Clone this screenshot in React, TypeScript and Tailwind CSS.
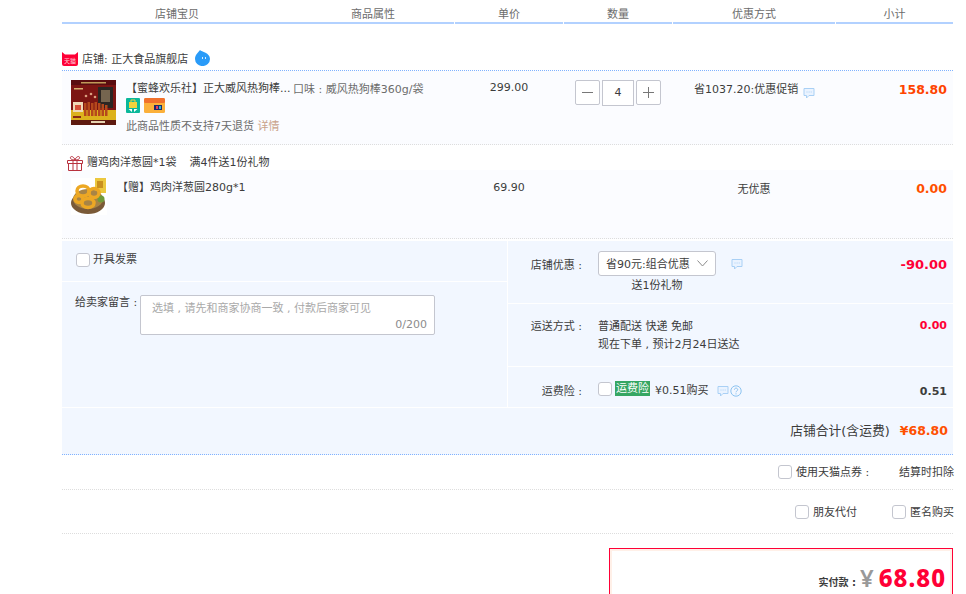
import type { ReactNode } from 'react';

const FONT = "font-['DejaVu_Sans','Noto_Sans_CJK_SC',sans-serif]";
const NUM = "font-['DejaVu_Sans','Noto_Sans_CJK_SC',sans-serif] font-bold";

function Checkbox() {
  return <span className="block w-[14px] h-[14px] shrink-0 bg-white border border-[#c4c6cf] rounded-[3px]" />;
}

function ChatIcon() {
  return (
    <svg width="12" height="12" viewBox="0 0 12 12" fill="none" className="block shrink-0">
      <path d="M1 1.500h10v7H6L3.500 11V8.500H1z" fill="#eaf3ff" stroke="#a9d0f5" strokeWidth="1" />
      <path d="M3.500 5h1M5.600 5h1M7.700 5h1" stroke="#a9d0f5" strokeWidth="1" />
    </svg>
  );
}

function HelpIcon() {
  return (
    <svg width="12" height="12" viewBox="0 0 12 12" fill="none" className="block shrink-0">
      <circle cx="6" cy="6" r="5.200" stroke="#8cc3f0" strokeWidth="1" />
      <path d="M4.400 4.700c0-2.100 3.300-2.100 3.300 0 0 1.300-1.700 1.200-1.700 2.600M6 8.300v1.100" stroke="#8cc3f0" strokeWidth="1" />
    </svg>
  );
}

function TmallIcon() {
  return (
    <svg width="16" height="14" viewBox="0 0 16 14" className="block">
      <path d="M0 0l3 2.500h10L16 0v12a2 2 0 0 1-2 2H2a2 2 0 0 1-2-2z" fill="#ff0036" />
      <text x="8" y="10.500" textAnchor="middle" fontSize="6" fill="#ffc9d4" fontFamily="'Noto Sans CJK SC', sans-serif">天猫</text>
    </svg>
  );
}

function WangIcon() {
  return (
    <svg width="15" height="16" viewBox="0 0 15 16" className="block">
      <path d="M5 0c1.500 2 10 2.500 10 9a7.400 7 0 0 1-15 0C0 5 3 2.500 5 0z" fill="#2a9bf8" />
      <rect x="7" y="7" width="1" height="2" fill="#d6ecff" />
      <rect x="10" y="7" width="1" height="2" fill="#d6ecff" />
    </svg>
  );
}

function GiftIcon() {
  return (
    <svg width="16" height="16" viewBox="0 0 16 16" fill="none" className="block">
      <path d="M.500 5.500h15v3H.500zM1.500 8.500h13V15.500h-13zM6 5.500V15.500M10 5.500V15.500" stroke="#b8323f" strokeWidth="1" />
      <path d="M8 5C5 5 3 4 3.500 2.200 4 .8 7 1.500 8 5zM8 5c3 0 5-1 4.500-2.800C12 .8 9 1.500 8 5z" stroke="#b8323f" strokeWidth="1" />
    </svg>
  );
}

// rough drawing of the sausage box photo
function SausageThumb() {
  return (
    <svg width="45" height="45" viewBox="0 0 45 45" className="block shrink-0">
      <rect width="45" height="45" fill="#7c1513" />
      <rect width="45" height="5" fill="#5a0d10" />
      <rect x="10" y="2" width="25" height="1.500" fill="#c09a58" />
      <rect x="3" y="8" width="9" height="1.500" fill="#d8b070" />
      <rect x="27" y="7" width="15" height="21" fill="#2b2623" />
      <rect x="30" y="10" width="9" height="12" fill="#75654f" />
      <rect x="0" y="30" width="45" height="10" fill="#dcb11c" />
      <rect x="0" y="40" width="45" height="5" fill="#5e1a10" />
      <rect x="2" y="22" width="10" height="10" fill="#efd9b8" />
      <rect x="4" y="25" width="6" height="5" fill="#d5503a" />
      <g fill="#b5481c">
        <rect x="13" y="23" width="2.500" height="13" />
        <rect x="16.500" y="22" width="2.500" height="14" />
        <rect x="20" y="23" width="2.500" height="13" />
        <rect x="23.500" y="22" width="2.500" height="14" />
        <rect x="27" y="23" width="2.500" height="13" />
        <rect x="30.500" y="24" width="2.500" height="12" />
        <rect x="34" y="25" width="2.500" height="11" />
      </g>
      <g fill="#dba080">
        <circle cx="15" cy="16" r="1.300" />
        <circle cx="20" cy="14" r="1.300" />
        <circle cx="24" cy="17" r="1.300" />
      </g>
      <rect x="20" y="41" width="14" height="2" fill="#e6d3b0" />
      <rect x="2" y="36" width="8" height="2" fill="#8a2a12" />
    </svg>
  );
}

// rough drawing of the onion ring basket photo
function RingsThumb() {
  return (
    <svg width="36" height="37" viewBox="0 0 36 37" className="block shrink-0">
      <rect width="36" height="37" fill="#ffffff" />
      <rect x="24" y="0" width="11" height="15" fill="#ecc83f" />
      <rect x="26" y="3" width="6" height="7" fill="#c9901f" />
      <ellipse cx="17" cy="25" rx="17" ry="11" fill="#7a5a38" />
      <ellipse cx="17" cy="21" rx="15" ry="10" fill="#a88445" />
      <circle cx="30" cy="21" r="3.500" fill="#6f9a3a" />
      <g fill="none" stroke="#eda824" strokeWidth="3.500">
        <ellipse cx="12" cy="13" rx="6" ry="5" />
        <ellipse cx="23" cy="15" rx="5" ry="4.500" />
        <ellipse cx="8" cy="21" rx="4" ry="3.500" />
        <ellipse cx="17" cy="25" rx="6" ry="4.500" />
      </g>
    </svg>
  );
}

function BagBadge() {
  return (
    <svg width="14" height="15" viewBox="0 0 14 15" className="block">
      <rect width="14" height="15" rx="1" fill="#0bb89a" />
      <rect x="3" y="4" width="8" height="6" fill="#f4d23c" />
      <path d="M5 4V2h4v2" stroke="#f4d23c" fill="none" />
      <path d="M2.500 11h3.500v3zM8 11h3.500L8 14z" fill="#ffffff" />
    </svg>
  );
}

function CardBadge() {
  return (
    <svg width="21" height="15" viewBox="0 0 21 15" className="block">
      <rect width="21" height="15" rx="1.500" fill="#fbb03b" />
      <rect width="21" height="5" rx="1.500" fill="#f0702c" />
      <rect x="10" y="7" width="8" height="5" fill="#1f2a6b" />
      <rect x="12" y="8" width="2" height="3" fill="#e83a5a" />
      <rect x="15" y="8" width="2" height="3" fill="#2fb5c9" />
    </svg>
  );
}

function StepButton({ children }: { children: ReactNode }) {
  return (
    <span className="w-[25px] h-[25px] flex items-center justify-center bg-white border border-[#c4c6cf] rounded-[2px]">
      {children}
    </span>
  );
}

function Stepper() {
  return (
    <div className="flex gap-[2px] items-start">
      <StepButton>
        <span className="block w-[11px] h-px bg-[#777]" />
      </StepButton>
      <span className="w-[32px] h-[26px] flex items-center justify-center bg-white border border-[#c4c6cf] text-[#3c3c3c]">4</span>
      <StepButton>
        <svg width="11" height="11" viewBox="0 0 11 11" className="block">
          <path d="M0 5.500h11M5.500 0v11" stroke="#777" strokeWidth="1" />
        </svg>
      </StepButton>
    </div>
  );
}

function InfoRow({ label, height, children, amount }: { label: string; height: string; children: ReactNode; amount: ReactNode }) {
  return (
    <div className={`flex bg-[#f2f7ff] ${height}`}>
      <div className="w-[74px] mt-[2px] text-right text-[#3c3c3c] whitespace-nowrap">{label}</div>
      <div className="flex-1 ml-4">{children}</div>
      <div className="pr-[6px] text-right">{amount}</div>
    </div>
  );
}

export default function App() {
  return (
    <div className={`w-[966px] h-[594px] overflow-hidden bg-white text-[11px] leading-4 text-[#3c3c3c] ${FONT}`}>
      <div className="ml-[62px] w-[891px]">
        {/* column titles */}
        <div className="flex gap-px text-center text-[#6c6c6c] h-6">
          <div className="w-[392px] flex border-b-2 border-[#b2d1ff] pt-[7px]">
            <div className="w-[230px]">店铺宝贝</div>
            <div className="flex-1">商品属性</div>
          </div>
          <div className="w-[108px] border-b-2 border-[#b2d1ff] pt-[7px]">单价</div>
          <div className="w-[108px] border-b-2 border-[#b2d1ff] pt-[7px]">数量</div>
          <div className="w-[162px] border-b-2 border-[#b2d1ff] pt-[7px]">优惠方式</div>
          <div className="w-[117px] border-b-2 border-[#b2d1ff] pt-[7px]">小计</div>
        </div>

        {/* shop */}
        <div className="mt-[26px] h-[21px] flex items-start border-b border-dotted border-[#80b2ff]">
          <div className="mt-[2px]"><TmallIcon /></div>
          <span className="ml-1 mt-[2px]">店铺: 正大食品旗舰店</span>
          <div className="ml-[7px]"><WangIcon /></div>
        </div>

        {/* main item */}
        <div className="flex gap-px h-[74px] bg-[#fbfcff] border-b border-dotted border-[#dddddd]">
          <div className="w-[392px] flex pl-[9px]">
            <div className="pt-[9px]"><SausageThumb /></div>
            <div className="w-[167px] ml-[10px] pt-[10px]">
              <div className="whitespace-nowrap text-[#3c3c3c]">【蜜蜂欢乐社】正大威风热狗棒...</div>
              <div className="flex gap-1 mt-px"><BagBadge /><CardBadge /></div>
              <div className="mt-[6px] whitespace-nowrap text-[#6c6c6c]">此商品性质不支持7天退货 <span className="text-[#c9a28a]">详情</span></div>
            </div>
            <div className="pt-[11px] whitespace-nowrap text-[#6c6c6c]">口味 : 威风热狗棒360g/袋</div>
          </div>
          <div className="w-[108px] text-center pt-[9px]">299.00</div>
          <div className="w-[108px] pl-[11px] pt-[9px]"><Stepper /></div>
          <div className="w-[162px] pl-[21px] pt-[11px] flex items-start">
            <span>省1037.20:优惠促销</span>
            <div className="ml-[5px] mt-[5px]"><ChatIcon /></div>
          </div>
          <div className={`w-[117px] pr-[6px] pt-[11px] text-right text-[12.500px] text-[#ff4400] ${NUM}`}>158.80</div>
        </div>

        {/* gift title */}
        <div className="h-[25px] flex items-start pl-[5px] pt-[10px]">
          <GiftIcon />
          <span className="ml-[4px]">赠鸡肉洋葱圆*1袋</span>
          <span className="ml-[13px]">满4件送1份礼物</span>
        </div>

        {/* gift item */}
        <div className="flex gap-px h-[69px] bg-[#fbfcff] border-b border-dotted border-[#dddddd]">
          <div className="w-[392px] flex pl-[9px] pt-[8px]">
            <RingsThumb />
            <span className="ml-[10px] mt-[2px]">【赠】鸡肉洋葱圆280g*1</span>
          </div>
          <div className="w-[108px] text-center pt-[10px]">69.90</div>
          <div className="w-[108px]" />
          <div className="w-[162px] text-center pt-[12px]">无优惠</div>
          <div className={`w-[117px] pr-[6px] pt-[11px] text-right text-[12.500px] text-[#ff5000] ${NUM}`}>0.00</div>
        </div>

        {/* options */}
        <div className="mt-[2px] flex gap-px h-[166px]">
          <div className="w-[445px] flex flex-col gap-px">
            <div className="h-10 bg-[#f2f7ff] flex items-start pl-[14px] pt-[12px]">
              <Checkbox />
              <span className="ml-[3px] -mt-[1px]">开具发票</span>
            </div>
            <div className="flex-1 bg-[#f2f7ff] flex items-start pl-[13px] pt-[13px]">
              <span className="whitespace-nowrap w-[65px]">给卖家留言 :</span>
              <div className="w-[295px] h-10 bg-white border border-[#c4c6cf] rounded-[2px] pl-[11px] pr-[7px] pt-[5px] text-[#a9a9a9]">
                <div>选填 , 请先和商家协商一致 , 付款后商家可见</div>
                <div className="text-right text-[#8c8c8c]">0/200</div>
              </div>
            </div>
          </div>
          <div className="w-[445px] flex flex-col gap-px">
            <InfoRow
              label="店铺优惠 :"
              height="h-[62px] pt-[15px]"
              amount={<span className={`block mt-px text-[13px] text-[#ff0036] ${NUM}`}>-90.00</span>}
            >
              <div className="flex items-start -mt-[5px]">
                <div className="w-[118px] h-[25px] flex items-center justify-between bg-white border border-[#c4c6cf] rounded-[3px] pl-[7px] pr-[7px]">
                  <span className="whitespace-nowrap mt-[3px]">省90元:组合优惠</span>
                  <svg width="11" height="7" viewBox="0 0 11 7" fill="none" className="block">
                    <path d="M.500.500l5 5.500 5-5.500" stroke="#8c8c8c" strokeWidth="1" />
                  </svg>
                </div>
                <div className="ml-[15px] mt-[7px]"><ChatIcon /></div>
              </div>
              <div className="w-[118px] text-center mt-[2px]">送1份礼物</div>
            </InfoRow>
            <InfoRow
              label="运送方式 :"
              height="h-[62px] pt-[13px]"
              amount={<span className={`block mt-px text-[11px] text-[#ff0036] ${NUM}`}>0.00</span>}
            >
              <div className="mt-[2px]">普通配送 快递 免邮</div>
              <div className="mt-[2px]">现在下单 , 预计2月24日送达</div>
            </InfoRow>
            <InfoRow
              label="运费险 :"
              height="flex-1 pt-[15px]"
              amount={<span className={`block mt-[2px] text-[11px] text-[#3c3c3c] ${NUM}`}>0.51</span>}
            >
              <div className="flex items-start">
                <Checkbox />
                <span className="ml-[3px] w-[35px] h-[15px] -mt-px bg-[#36a663] text-white text-center leading-[16px] whitespace-nowrap">运费险</span>
                <span className="ml-[5px] mt-px whitespace-nowrap">¥0.51购买</span>
                <div className="ml-[8px] mt-[3px] flex gap-px"><ChatIcon /><HelpIcon /></div>
              </div>
            </InfoRow>
          </div>
        </div>

        {/* shop total */}
        <div className="mt-px h-[47px] flex items-center justify-end pr-[5px] bg-[#f2f7ff] border-b border-dotted border-[#80b2ff]">
          <span className="text-[12.800px]">店铺合计(含运费)</span>
          <span className={`ml-[10px] text-[12.500px] text-[#ff5000] ${NUM}`}>¥68.80</span>
        </div>

        {/* coupons */}
        <div className="h-[35px] flex items-center justify-end border-b border-dotted border-[#dddddd]">
          <div className="flex items-center">
            <Checkbox />
            <span className="ml-1 mt-[2px] w-[103px] whitespace-nowrap">使用天猫点券 :</span>
            <span className="mt-[2px] w-[54px] whitespace-nowrap">结算时扣除</span>
          </div>
        </div>
        <div className="h-[44px] flex items-center justify-end border-b border-dotted border-[#dddddd]">
          <div className="flex items-center">
            <Checkbox />
            <span className="ml-1 mt-[2px] w-[43px] whitespace-nowrap">朋友代付</span>
            <div className="ml-9"><Checkbox /></div>
            <span className="ml-1 mt-[2px] w-[43px] whitespace-nowrap">匿名购买</span>
          </div>
        </div>

        {/* amount due */}
        <div className="mt-[14px] ml-[547px] w-[344px] h-[90px] border border-[#ff0036] bg-white">
          <div className="h-full border-2 border-[#fff0e8] flex items-start justify-end pt-[15px] pr-[4px]">
            <span className="mt-[9px] text-[10px] font-bold">实付款 :</span>
            <span className="ml-[4px] text-[24px] leading-6 font-semibold text-[#999999] font-['Noto_Sans',sans-serif]">¥</span>
            <span className="ml-[5px] text-[24px] leading-6 font-extrabold tracking-[1px] text-[#ff0036] font-['Noto_Sans',sans-serif]">68.80</span>
          </div>
        </div>
      </div>
    </div>
  );
}
